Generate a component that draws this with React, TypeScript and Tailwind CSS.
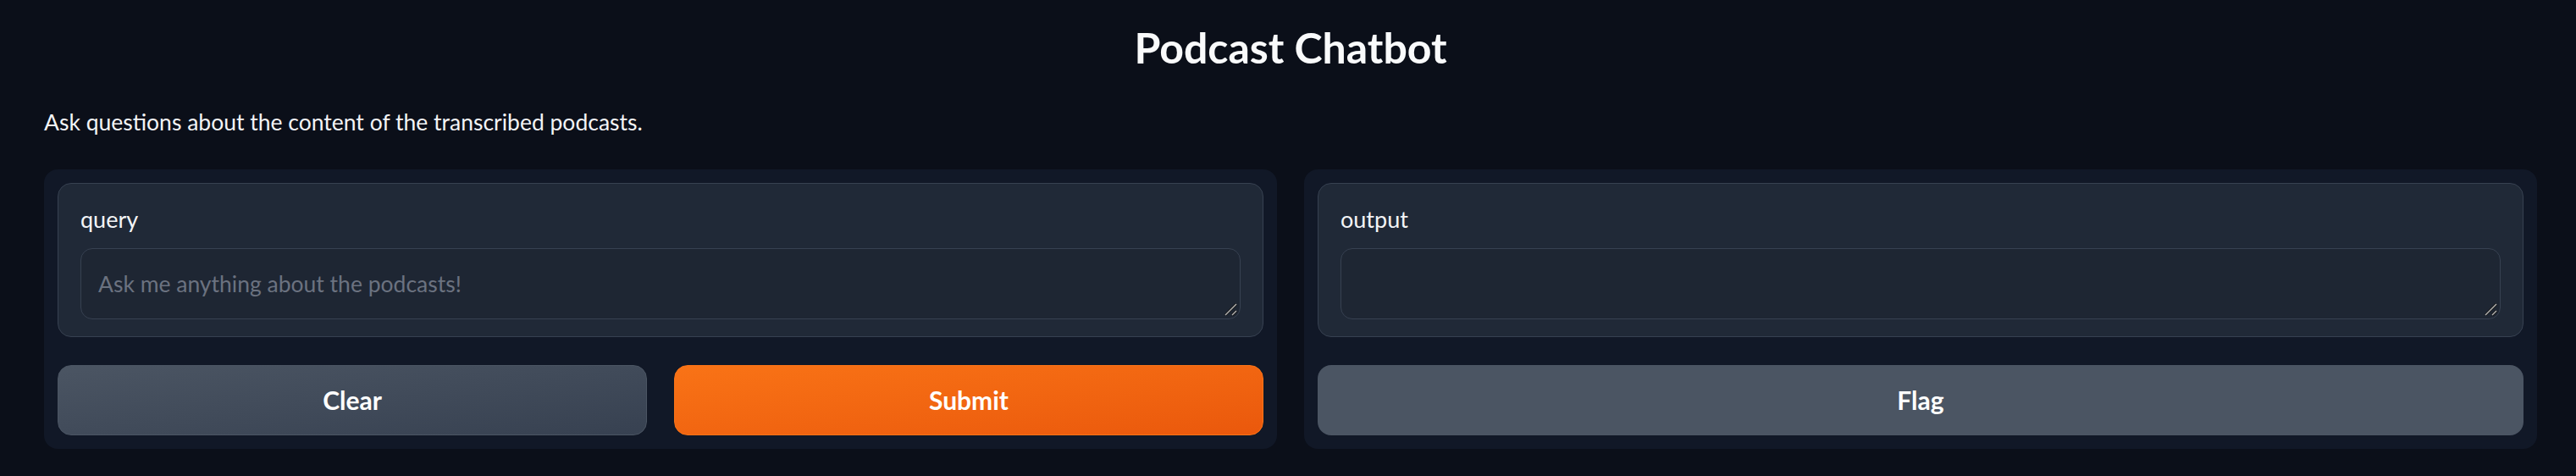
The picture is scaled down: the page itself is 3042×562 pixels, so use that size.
import { FC } from "react";

const Grip: FC = () => (
  <svg
    className="pointer-events-none absolute bottom-[3px] right-[3px]"
    width="16"
    height="16"
    viewBox="0 0 16 16"
  >
    <path d="M1 14 L14 1" stroke="#111" strokeWidth="3" />
    <path d="M9 14 L14 9" stroke="#111" strokeWidth="3" />
    <path d="M1 14 L14 1" stroke="#b4b4b4" strokeWidth="1.5" />
    <path d="M9 14 L14 9" stroke="#b4b4b4" strokeWidth="1.5" />
  </svg>
);

const TextBlock: FC<{ label: string; placeholder?: string }> = ({ label, placeholder }) => (
  <div className="rounded-[16px] border border-[#374151] bg-[#202937] px-[26px] pb-[20px] pt-[24px]">
    <div className="mb-[16px] h-[36px] text-[27px] leading-[36px] text-[#f3f4f6]">{label}</div>
    <div className="relative">
      <textarea
        readOnly={!placeholder}
        placeholder={placeholder}
        className="block h-[84px] w-full resize-none rounded-[14px] border border-[#374151] bg-[#1e2633] px-[20px] pt-[25px] text-[26.5px] leading-[32px] text-[#f3f4f6] outline-none placeholder:text-[#6b7280]"
      />
      <Grip />
    </div>
  </div>
);

const App: FC = () => {
  return (
    <div className="min-h-[562px] w-full bg-[#0b0f19] pl-[52px] pr-[46px] font-['Lato','Noto_Sans',sans-serif]">
      <h1 className="pt-[26px] text-center text-[50px] font-bold leading-[60px] text-[#f9fafb]">
        Podcast Chatbot
      </h1>
      <p className="mt-[42px] text-[26.5px] leading-[32px] text-[#f3f4f6]">
        Ask questions about the content of the transcribed podcasts.
      </p>
      <div className="mt-[40px] flex gap-[32px]">
        <div className="flex flex-1 flex-col gap-[33px] rounded-[16px] bg-[#111827] p-[16px]">
          <TextBlock label="query" placeholder="Ask me anything about the podcasts!" />
          <div className="flex gap-[32px]">
            <button className="h-[83px] flex-1 rounded-[16px] border border-[#4b5563] bg-gradient-to-br from-[#4b5563] to-[#374151] text-[30px] font-bold text-white">
              Clear
            </button>
            <button className="h-[83px] flex-1 rounded-[16px] border border-[#f97316] bg-gradient-to-br from-[#f97316] to-[#ea580c] text-[30px] font-bold text-white">
              Submit
            </button>
          </div>
        </div>
        <div className="flex flex-1 flex-col gap-[33px] rounded-[16px] bg-[#111827] p-[16px]">
          <TextBlock label="output" />
          <button className="h-[83px] w-full rounded-[16px] bg-[#4b5563] text-[30px] font-bold text-white">
            Flag
          </button>
        </div>
      </div>
    </div>
  );
};

export default App;
